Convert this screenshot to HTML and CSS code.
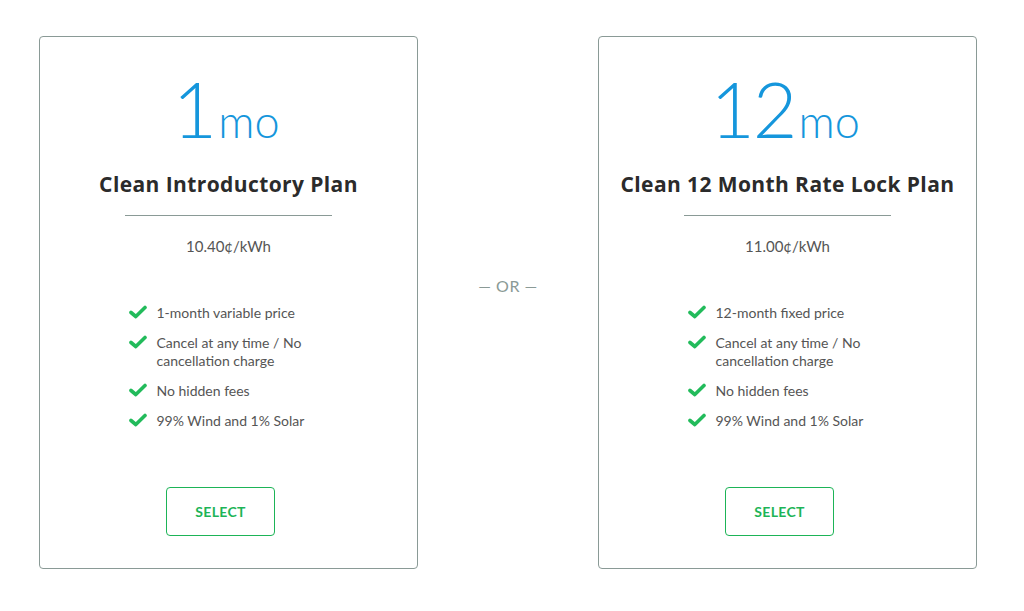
FILE: index.html
```html
<!DOCTYPE html>
<html>
<head>
<meta charset="utf-8">
<link rel="stylesheet" href="styles.css">
</head>
<body>
<div class="plans">
  <div class="card">
    <div class="term"><span class="num">1</span><span class="unit">mo</span></div>
    <h2 class="title">Clean Introductory Plan</h2>
    <div class="rule"></div>
    <div class="price">10.40¢/kWh</div>
    <ul class="features">
      <li><svg class="check" viewBox="0 0 18 14"><path d="M2 7.5 L6.8 11.5 L16 2.5"/></svg><span>1-month variable price</span></li>
      <li><svg class="check" viewBox="0 0 18 14"><path d="M2 7.5 L6.8 11.5 L16 2.5"/></svg><span>Cancel at any time / No cancellation charge</span></li>
      <li><svg class="check" viewBox="0 0 18 14"><path d="M2 7.5 L6.8 11.5 L16 2.5"/></svg><span>No hidden fees</span></li>
      <li><svg class="check" viewBox="0 0 18 14"><path d="M2 7.5 L6.8 11.5 L16 2.5"/></svg><span>99% Wind and 1% Solar</span></li>
    </ul>
    <button class="select">SELECT</button>
  </div>
  <div class="or">— OR —</div>
  <div class="card">
    <div class="term"><span class="num">12</span><span class="unit">mo</span></div>
    <h2 class="title">Clean 12 Month Rate Lock Plan</h2>
    <div class="rule"></div>
    <div class="price">11.00¢/kWh</div>
    <ul class="features">
      <li><svg class="check" viewBox="0 0 18 14"><path d="M2 7.5 L6.8 11.5 L16 2.5"/></svg><span>12-month fixed price</span></li>
      <li><svg class="check" viewBox="0 0 18 14"><path d="M2 7.5 L6.8 11.5 L16 2.5"/></svg><span>Cancel at any time / No cancellation charge</span></li>
      <li><svg class="check" viewBox="0 0 18 14"><path d="M2 7.5 L6.8 11.5 L16 2.5"/></svg><span>No hidden fees</span></li>
      <li><svg class="check" viewBox="0 0 18 14"><path d="M2 7.5 L6.8 11.5 L16 2.5"/></svg><span>99% Wind and 1% Solar</span></li>
    </ul>
    <button class="select">SELECT</button>
  </div>
</div>
</body>
</html>
```
FILE: styles.css
```css
* { box-sizing: border-box; }
html, body { margin: 0; padding: 0; background: #fff; }
body { font-family: "Lato", "Open Sans", sans-serif; color: #555; }
.plans {
  display: flex;
  align-items: flex-start;
  padding: 36px 0 0 39px;
}
.card {
  width: 379px;
  height: 533px;
  border: 1px solid #8a9a96;
  border-radius: 4px;
  display: flex;
  flex-direction: column;
  align-items: center;
  padding-top: 31px;
}
.or {
  width: 180px;
  text-align: center;
  margin-top: 240px;
  font-size: 16px;
  color: #8a9a96;
  letter-spacing: 0.5px;
}
.term {
  display: flex;
  align-items: baseline;
  color: #1596dc;
  height: 80px;
  line-height: 80px;
  margin-right: 5px;
}
.num { font-size: 77px; font-weight: 300; letter-spacing: -2px; }
.unit { font-size: 45px; font-weight: 300; margin-left: 3px; }
.title {
  margin: 22px 0 0;
  font-family: "Open Sans", "Lato", sans-serif;
  font-size: 21px;
  font-weight: 700;
  letter-spacing: 0.4px;
  color: #2b2b2b;
  line-height: 28px;
}
.rule {
  width: 207px;
  height: 1px;
  background: #8a9a96;
  margin-top: 17px;
}
.price {
  margin-top: 20px;
  font-size: 15px;
  line-height: 20px;
  color: #555;
}
.features {
  list-style: none;
  margin: 48px 0 0;
  padding: 0;
  width: 200px;
  display: flex;
  flex-direction: column;
  gap: 12px;
}
.features li {
  display: flex;
  align-items: flex-start;
  font-size: 14px;
  line-height: 18px;
  color: #555;
}
.check {
  width: 18px;
  height: 14px;
  flex: none;
  margin: 1px 10px 0 0;
  fill: none;
  stroke: #22bb5b;
  stroke-width: 3.6;
  stroke-linecap: round;
  stroke-linejoin: round;
}
.select {
  margin-top: auto;
  margin-bottom: 32px;
  margin-right: 16px;
  width: 109px;
  height: 49px;
  border: 1px solid #1db457;
  border-radius: 4px;
  background: #fff;
  color: #1db457;
  font-family: "Lato", sans-serif;
  font-weight: 700;
  font-size: 14px;
  letter-spacing: 0.3px;
  cursor: pointer;
}
```
